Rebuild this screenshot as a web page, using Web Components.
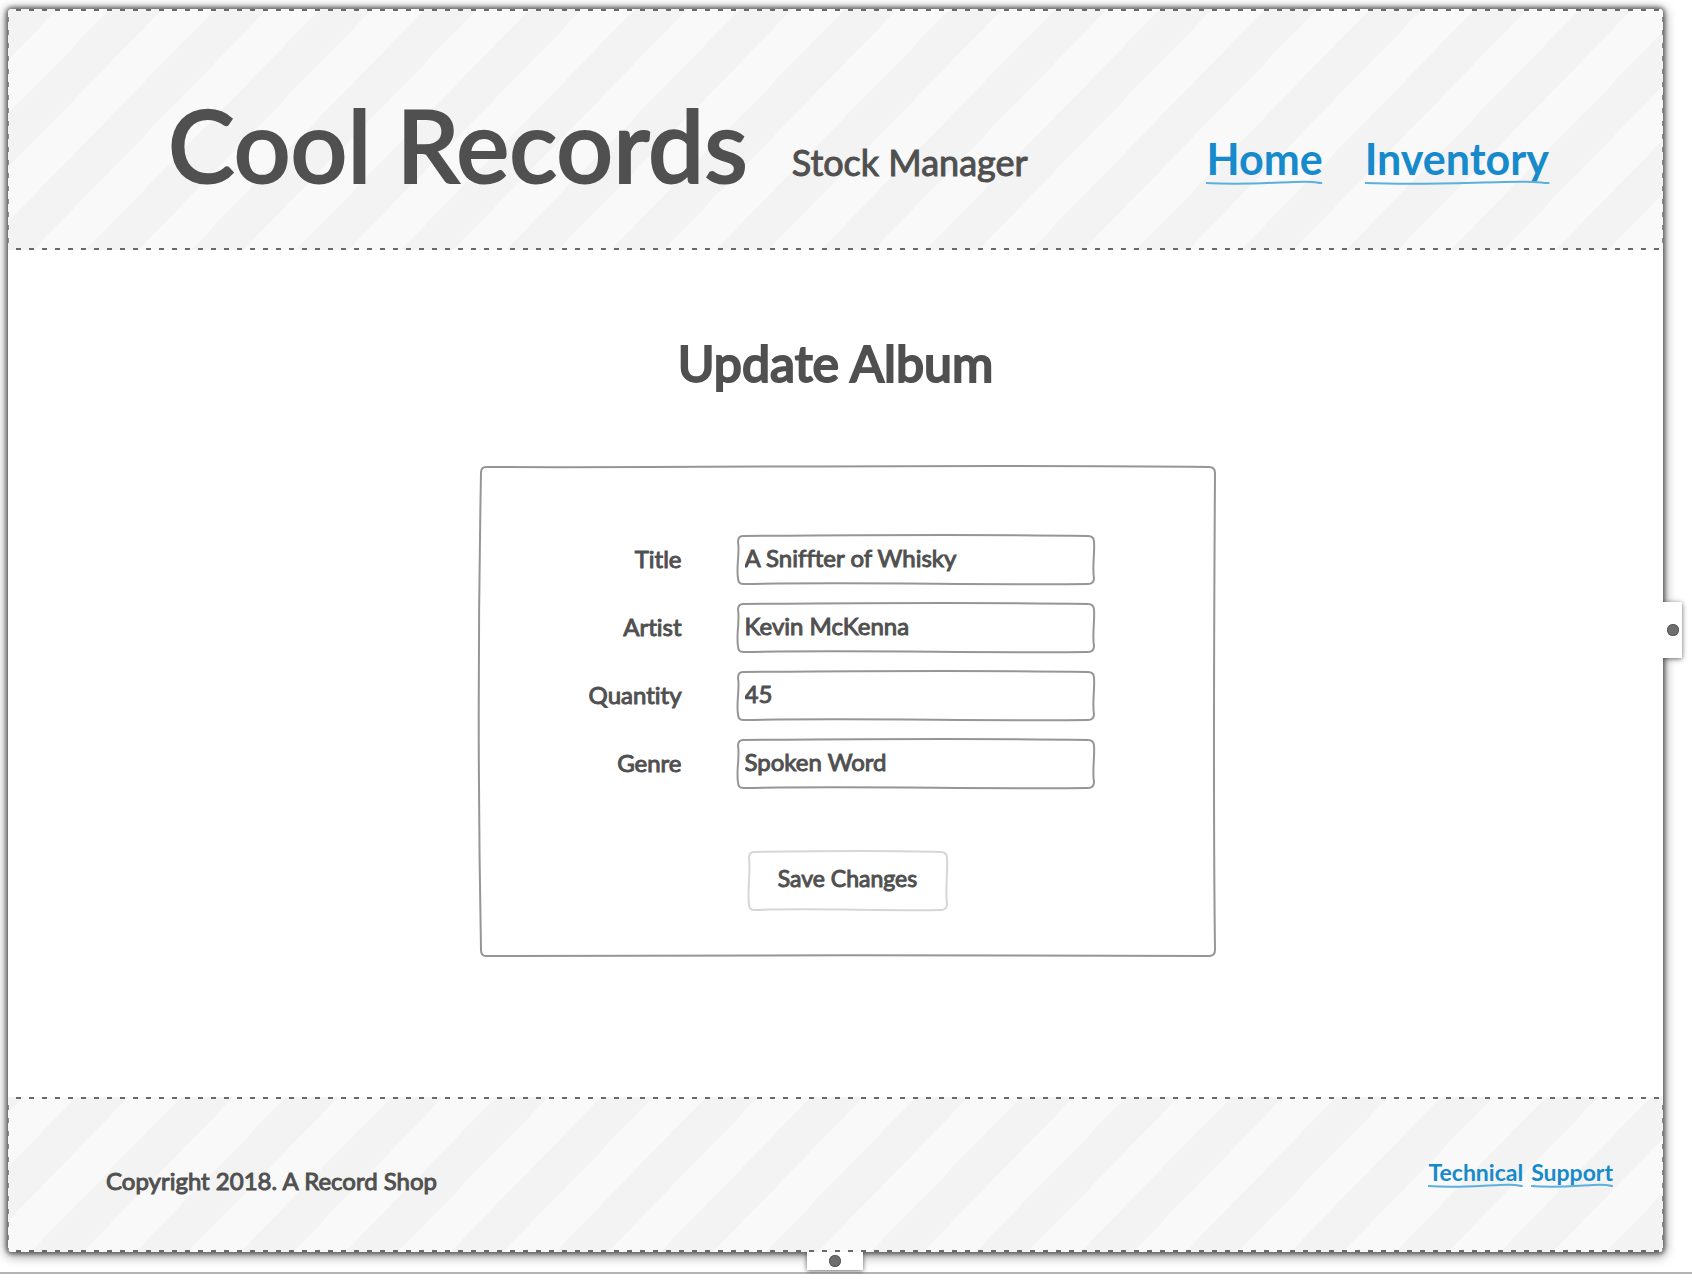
<!DOCTYPE html>
<html lang="en">
<head>
<meta charset="utf-8">
<title>Cool Records – Update Album</title>
<style>
  html { background: #fff; }
  body {
    margin: 0;
    color: #505050;
    font-family: Lato, "Liberation Sans", sans-serif;
    font-variant-ligatures: none;
  }
</style>
</head>
<body>
<wire-page>
  <wire-band slot="header">
    <site-header></site-header>
  </wire-band>
  <album-form></album-form>
  <wire-band slot="footer" class="foot">
    <site-footer></site-footer>
  </wire-band>
</wire-page>

<script>
const define = (name, html, setup) => {
  const template = document.createElement('template');
  template.innerHTML = html;
  customElements.define(name, class extends HTMLElement {
    constructor() {
      super();
      this.attachShadow({ mode: 'open' }).append(template.content.cloneNode(true));
    }
    connectedCallback() { if (setup) setup(this, this.shadowRoot); }
  });
};

/* Hand-drawn rounded frame. `bow` lists how far the top, right, bottom and
   left edges bend outwards (first half and second half of each edge). */
define('sketch-frame', `
  <style>
    :host { display: block; position: relative; --pen: #969696; }
    :host([faint]) { --pen: #d6d6d6; }
    svg { position: absolute; inset: 0; width: 100%; height: 100%; overflow: visible; pointer-events: none; }
    path { fill: none; stroke: var(--pen); stroke-width: 2; stroke-linejoin: round; }
  </style>
  <svg aria-hidden="true"><path/></svg>
  <slot></slot>`, (host, root) => {
  const path = root.querySelector('path');
  const b = (host.getAttribute('bow') || '1 2 1 -2 1 -2 2 -2').split(' ').map(Number);
  const draw = () => {
    const w = host.clientWidth - 1, h = host.clientHeight - 1, r = 6;
    const x1 = w / 3, x2 = w * 2 / 3, y1 = h / 3, y2 = h * 2 / 3;
    path.setAttribute('d',
      `M${r} 1C${x1} ${1 - b[0]} ${x2} ${1 - b[1]} ${w - r} 1Q${w} 1 ${w} ${r + 1}` +
      `C${w + b[2]} ${y1} ${w + b[3]} ${y2} ${w} ${h - r}Q${w} ${h} ${w - r} ${h}` +
      `C${x2} ${h + b[4]} ${x1} ${h + b[5]} ${r} ${h}Q1 ${h} 1 ${h - r}` +
      `C${1 - b[6]} ${y2} ${1 - b[7]} ${y1} 1 ${r + 1}Q1 1 ${r} 1Z`);
  };
  draw();
  new ResizeObserver(draw).observe(host);
});

/* Underlined word with a slightly wavy pen line below it. */
define('sketch-word', `
  <style>
    :host { display: inline-block; position: relative; white-space: nowrap; }
    svg { position: absolute; left: 0; bottom: -2px; width: 100%; height: 4px; overflow: visible; }
    path { fill: none; stroke: #5cb0de; stroke-width: 2; vector-effect: non-scaling-stroke; }
  </style>
  <slot></slot>
  <svg viewBox="0 0 100 4" preserveAspectRatio="none" aria-hidden="true"><path d="M0 2C30 4 50 2 75 1S92 2 100 2"/></svg>`);

/* Resize grip on the edge of the board. */
define('drag-grip', `
  <style>
    :host {
      display: grid; place-items: center; width: 56px; height: 18px; background: #fff;
      box-shadow: 0 1px 5px rgba(0,0,0,.6);
    }
    :host([side]) { width: 19px; height: 56px; }
    i { width: 12px; height: 12px; border-radius: 50%; background: #6e6e6e; box-shadow: inset 0 0 0 1px #5a5a5a; }
  </style><i></i>`);

define('wire-page', `
  <style>
    :host { display: block; padding: 9px 29px 0 8px; border-bottom: 2px solid #b3b3b3; }
    .board {
      position: relative; display: flex; flex-direction: column; margin-bottom: 20px;
      background: #fff; border-radius: 4px;
      box-shadow: 0 0 4px 2px rgba(0,0,0,.5), 0 2px 12px 2px rgba(0,0,0,.4);
    }
    main { padding: 79px 0 140px; }
    drag-grip { position: absolute; top: 100%; left: calc(50% - 29px); clip-path: inset(0 -10px -10px); }
    drag-grip[side] { left: 100%; top: calc(50% - 29px); clip-path: inset(-10px -10px -10px 0); }
  </style>
  <div class="board">
    <slot name="header"></slot>
    <main><slot></slot></main>
    <slot name="footer"></slot>
    <drag-grip></drag-grip>
    <drag-grip side></drag-grip>
  </div>`);

/* Striped region with a dashed outline. */
define('wire-band', `
  <style>
    :host {
      --across: repeating-linear-gradient(90deg, transparent 0 8px, #6a6a6a 8px 13px);
      --down: repeating-linear-gradient(180deg, transparent 0 8px, #8a8a8a 8px 13px);
      --shift: -3px;
      display: block; border-radius: 4px 4px 0 0;
      background:
        var(--across) 0 0 / 100% 2px no-repeat,
        var(--across) 0 100% / 100% 2px no-repeat,
        var(--down) 0 0 / 1px 100% no-repeat,
        var(--down) 100% 0 / 1px 100% no-repeat,
        linear-gradient(to bottom right, #f3f3f3 0 25%, #f9f9f9 25% 50%, #f3f3f3 50% 75%, #f9f9f9 75%) var(--shift) 0 / 105px 108px;
    }
    :host(.foot) { --shift: -37px; border-radius: 0 0 4px 4px; }
  </style>
  <slot></slot>`);

define('site-header', `
  <style>
    :host { display: flex; align-items: flex-end; box-sizing: border-box; height: 241px; padding: 0 114px 56px 160px; white-space: nowrap; }
    h1 { margin: 0; font-size: 100px; line-height: 100px; font-weight: 500; -webkit-text-stroke: 2px; }
    p { margin: 0 0 0 44px; font-size: 36px; line-height: 64px; -webkit-text-stroke: 1px; }
    nav { display: flex; gap: 42px; margin-left: auto; padding-bottom: 11px; }
    a { color: #168acb; font-size: 43px; line-height: 48px; font-weight: 700; text-decoration: none; }
    sketch-word { display: block; }
  </style>
  <h1>Cool Records</h1>
  <p>Stock Manager</p>
  <nav>
    <a href="#home"><sketch-word>Home</sketch-word></a>
    <a href="#inventory"><sketch-word>Inventory</sketch-word></a>
  </nav>`);

define('site-footer', `
  <style>
    :host { display: flex; justify-content: space-between; align-items: flex-start; box-sizing: border-box; height: 155px; padding: 61px 50px 0 98px; }
    p { margin: 7px 0 0; font-size: 24px; line-height: 32px; -webkit-text-stroke: 1px; }
    a { display: flex; gap: 8px; color: #168acb; font-size: 23px; line-height: 28px; font-weight: 700; text-decoration: none; }
  </style>
  <p>Copyright 2018. A Record Shop</p>
  <a href="#support"><sketch-word>Technical</sketch-word> <sketch-word>Support</sketch-word></a>`);

define('text-field', `
  <style>
    :host { display: grid; grid-template-columns: 202px 358px; column-gap: 55px; align-items: center; font-size: 24px; line-height: 32px; }
    label { padding-bottom: 3px; text-align: right; -webkit-text-stroke: 1px; }
    input {
      display: block; box-sizing: border-box; width: 100%; height: 50px; padding: 0 8px 6px; border: 0; outline: 0;
      background: transparent; color: inherit; font: inherit; font-variant-ligatures: none; -webkit-text-stroke: 1px;
    }
  </style>
  <label for="value"></label>
  <sketch-frame><input id="value" type="text"></sketch-frame>`, (host, root) => {
  root.querySelector('label').textContent = host.getAttribute('label');
  root.querySelector('input').value = host.getAttribute('value');
});

define('album-form', `
  <style>
    :host { display: flex; flex-direction: column; align-items: center; }
    h2 { margin: 0 0 69px; font-size: 50px; line-height: 68px; font-weight: 500; -webkit-text-stroke: 2px; }
    .card { width: 736px; margin-left: 24px; }
    form { display: flex; flex-direction: column; gap: 18px; padding: 69px 0 46px; }
    .save { align-self: center; width: 200px; margin-top: 44px; }
    button {
      display: block; width: 100%; height: 60px; padding: 0 0 6px; border: 0; background: transparent;
      color: #505050; font: inherit; font-size: 23px; -webkit-text-stroke: 1px;
    }
  </style>
  <h2>Update Album</h2>
  <sketch-frame class="card" bow="-1 3 -1 -2 0 -2 3 3">
    <form>
      <text-field label="Title" value="A Sniffter of Whisky"></text-field>
      <text-field label="Artist" value="Kevin McKenna"></text-field>
      <text-field label="Quantity" value="45"></text-field>
      <text-field label="Genre" value="Spoken Word"></text-field>
      <sketch-frame class="save" faint><button type="button">Save Changes</button></sketch-frame>
    </form>
  </sketch-frame>`);
</script>
</body>
</html>
